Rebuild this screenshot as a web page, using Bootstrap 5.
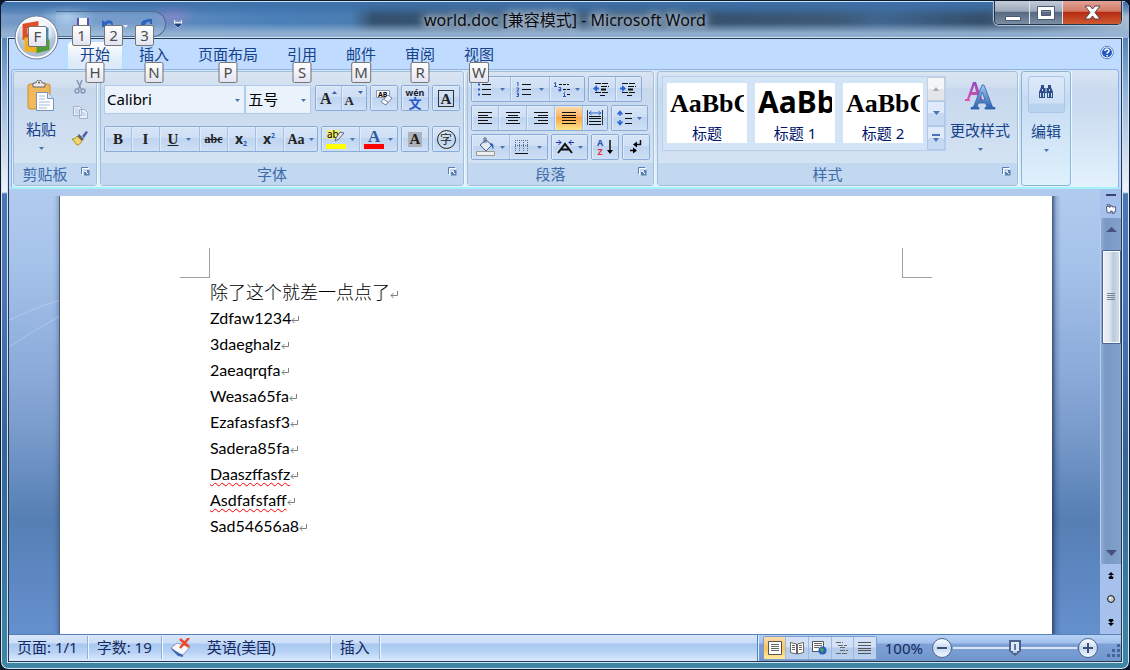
<!DOCTYPE html>
<html lang="zh-CN">
<head>
<meta charset="utf-8">
<meta name="viewport" content="width=device-width, initial-scale=1">
<title>world.doc [兼容模式] - Microsoft Word</title>
<link href="https://cdn.jsdelivr.net/npm/bootstrap@5.3.0/dist/css/bootstrap.min.css" rel="stylesheet">
<style>
  body { font: 15px/20px "Noto Sans", "Noto Sans CJK SC", sans-serif; color: #15428b; background: #0b1626; overflow: hidden; }
  .win { height: 100vh; border: 1px solid #0d1a2c; border-radius: 8px; position: relative; overflow: hidden;
    background: linear-gradient(180deg, #3a6da6 0, #4d7fb5 30px, #93b4da 90px, #dfe6f2 170px, #eef2fa 191px, #4a76b6 193px, #4a74b4 300px, #35649a 450px, #3f86a4 100%);
    box-shadow: inset 0 0 0 1px #d5e6f5; }
  .titlebar { height: 37px; position: relative; color: #000;
    background: linear-gradient(180deg, rgba(62,112,170,.95) 3px, rgba(62,112,170,.5) 10px, rgba(62,112,170,0) 15px, rgba(150,180,212,0) 22px, rgba(150,180,212,.9) 32px),
      radial-gradient(circle at 66px 14px, #a9cbe9 0, transparent 28px), radial-gradient(circle at 172px 8px, #8b88c8 0, transparent 24px),
      radial-gradient(ellipse at 195px 38px, #a9cfe4 0, transparent 38px),
      linear-gradient(90deg, #7499c6 0, #5d8abf 14%, #4a80b8 24%, #4a7db2 31%, #34526f 33%, #3a587a 45%, #34526f 62%, #3d5a78 74%, #40668f 78%, #34506c 87%, #4f6987 92%, #a9bdd2 100%);
    box-shadow: inset 0 1px 0 #cfe4f5; }
  .caption-text { font-size: 16px; color: #0c0c10; text-shadow: 0 0 6px #c3d3e4, 0 0 10px #c3d3e4, 0 0 12px #c3d3e4; }
  .qat { position: absolute; left: 55px; top: 10px; height: 26px; width: 110px; border: 1px solid #4d6c94; border-left: 0; border-radius: 0 13px 13px 0; background: rgba(190,215,240,.2); }
  .qat button, .qat-more { position: absolute; border: 0; background: none; padding: 0; line-height: 0; }
  .orb { position: absolute; z-index: 5; left: 13px; top: 14px; width: 45px; height: 45px; padding: 0; border: 0; background: none; line-height: 0; }
  .keytip { position: absolute; z-index: 6; height: 21px; min-width: 19px; padding: 0 2px; font-size: 15px; line-height: 19px; text-align: center; color: #4c4c4c;
    border: 1px solid #767676; border-radius: 2px; background: linear-gradient(#fff, #e3e4f0); }
  .winbtns { position: absolute; right: 7px; top: 0; height: 24px; border: 1px solid #24354b; border-top: 0; border-radius: 0 0 5px 5px; overflow: hidden; box-shadow: inset 0 0 0 1px #c7d4e2, 0 0 1px 1px #b8cbe0; }
  .winbtns button { border: 0; padding: 0; line-height: 0; border-right: 1px solid #dce4ee; background: linear-gradient(#c3ccd8 0, #9aa8b9 45%, #56687f 48%, #7c8ea4 100%); }
  .winbtns .w-min { width: 35px; } .winbtns .w-max { width: 33px; }
  .winbtns .w-close { width: 58px; border-right: 0; background: linear-gradient(#e2a395 0, #d27a66 45%, #b42a12 48%, #cf5a30 100%); }
  .client { margin: 0 7px 7px; border: 1px solid #28374f; min-height: 0; background: #bfdbff; box-shadow: 0 0 0 1px #cfe6f7; position: relative; z-index: 1; }
  .tabs { height: 30px; padding: 3px 7px 0 59px; gap: 5px; position: relative; z-index: 2; }
  .tabs .tab { position: relative; height: 27px; padding: 2px 12px 0; line-height: 20px; color: #15428b; text-decoration: none; }
  .tabs .tab.active { background: linear-gradient(#fff, #e3eefb 60%, #dbe8f8); border-radius: 4px 4px 0 0; box-shadow: -1px 0 0 #a8e4fa, 1px 0 0 #a8e4fa; }
  .tabs .keytip { top: 20px; left: 50%; transform: translateX(-50%); }
  .tabs .help { border: 0; background: none; padding: 0; line-height: 0; margin-top: 3px; }
  .ribbon { height: 120px; margin: 0 2px; padding: 1px; gap: 3px; border: 1px solid #8db2e3; border-bottom: 2px solid #a6f2fb; border-radius: 4px;
    background: linear-gradient(#dae5f2 0, #c9d9ee 22px, #cbdcf0 40px, #e3f2fd 100%); }
  .grp { border: 1px solid #9fc0dd; border-radius: 3px; flex: none; box-shadow: 1px 0 0 #eef7ff;
    background: linear-gradient(#dae5f2 0, #d0deef 15px, #c7d8ed 16px, #d8e6f4 100%); }
  .grp-label { height: 22px; background: #c1d8f0; color: #3e6aaa; position: relative; text-align: center; line-height: 23px; padding-right: 20px; }
  .grp-label button { position: absolute; right: 6px; top: 4px; border: 0; padding: 0; background: none; line-height: 0; }
  .g-clip { width: 84px; } .g-font { width: 364px; } .g-para { width: 187px; } .g-style { width: 361px; } .g-edit { width: 50px; border-color: #86b7d9; background: linear-gradient(#dce9f7 0, #cbdff5 22px, #c6dbf3 24px, #def1fc 100%); }
  .g-para .grp-body { padding: 4px 3px 0; } .g-font .grp-body { padding: 13px 3px 0; } .g-style .grp-body { padding: 4px 4px 0; }
  .row-gap { gap: 3px; }
  .bg-box { height: 26px; border: 1px solid #89abda; border-radius: 2px; overflow: hidden; display: flex; flex: none; }
  .rb { border: 0; border-radius: 0; padding: 0; display: flex; align-items: center; justify-content: center; gap: 4px; flex: 1 1 0; color: #222;
    background: linear-gradient(#d6e4f6 0, #cfdff4 45%, #bfd4f0 48%, #cfe0f6 100%); box-shadow: inset 1px 1px 0 #dfebf9; }
  .rb svg { overflow: visible; }
  .rb + .rb { border-left: 1px solid #a4c0e4; }
  .rb.on { background: linear-gradient(#fddcab 0, #fdbb6c 40%, #fba74a 50%, #fee58a 100%); }
  .w26{flex:0 0 26px}.w28{flex:0 0 28px}.w35{flex:0 0 35px}.w40{flex:0 0 40px}
  .b28{width:28px}.b37{width:37px}.b52{width:52px}.b77{width:77px}
  .serif { font: bold 15px/15px "Liberation Serif", serif; color: #222; }
  .boxed { border: 1px solid #333; width: 16px; height: 17px; line-height: 16px; }
  .shaded { background: #aeb2b8; width: 14px; }
  .ringed { border: 1px solid #222; border-radius: 50%; width: 19px; height: 19px; font: 12px/16px "Noto Sans CJK SC", sans-serif; }
  .py-top { font: bold 9px/9px "Noto Sans", sans-serif; color: #223; }
  .py-bot { font: bold 13px/12px "Noto Sans CJK SC", sans-serif; color: #2a56c8; }
  .az { font: bold 9px/9px "Noto Sans", sans-serif; color: #2a56b8; }
  .caret { flex: none; }
  .combo { height: 29px; border: 1px solid #b3cbea; background: #eaf2fb; position: relative; }
  .combo select { appearance: none; border: 0; background: none; width: 100%; height: 27px; padding: 0 2px 2px; color: #000; font-size: 15px; outline: 0; }
  .combo svg { position: absolute; right: 4px; top: 13px; pointer-events: none; }
  .c-face { width: 142px; } .c-size { width: 66px; }
  .big { border: 0; background: none; padding: 0; color: #15428b; display: flex; flex-direction: column; align-items: center; }
  .small-ic { border: 0; background: none; padding: 0; line-height: 0; }
  .gallery { height: 75px; width: 284px; border: 1px solid #b9d0ed; background: #d4e4f7; }
  .tiles { padding: 6px 0 0 4px; gap: 8px; }
  .tile { width: 80px; height: 60px; border: 0; padding: 0 3px; background: #fff; color: #00156e; overflow: hidden; display: block; line-height: 20px; }
  .tile .pv { display: block; width: 74px; height: 40px; overflow: hidden; text-align: left; color: #000; white-space: nowrap; font: bold 26px/42px "Liberation Serif", serif; }
  .tile .pv.h1s { font: bold 30px/37px "Noto Sans", sans-serif; }
  .gal-scroll { width: 18px; }
  .gal-scroll button { border: 1px solid #afc8ea; padding: 0; line-height: 0; flex: 1 1 0; background: linear-gradient(#dfebfb 48%, #c5d9f3 50%); }
  .gal-scroll button:first-child { background: linear-gradient(#f3f5f7 48%, #e2e5e9 50%); border-color: #c5cfdb; }
  .find-box { width: 37px; height: 37px; border: 1px solid #a9c6ea; border-radius: 3px; background: linear-gradient(#dce9f9 0, #cfe0f5 26px, #b9d2ee 27px); }
  .desk { min-height: 0; padding-top: 7px; position: relative; background: linear-gradient(#b1cbee 0, #a6c3ea 70px, #89a9d8 190px, #7a9ccc 240px, #567fb4 330px, #6490ce 100%); }
  .gut-l { width: 50px; flex: none; position: relative; overflow: hidden; box-shadow: inset -5px 0 5px -4px rgba(20,40,80,.35); }
  .gut-r { width: 48px; flex: none; background: linear-gradient(90deg, rgba(30,50,90,.75) 0, rgba(30,50,90,.2) 4px, transparent 9px); }
  .sheet { background: #fff; color: #000; border-left: 1px solid #4f5f78; overflow: hidden; }
  .corners { padding: 52px 120px 0; height: 82px; }
  .corner { width: 30px; height: 30px; border: 0 solid #a0a0a0; border-bottom-width: 1px; }
  .corner-l { border-right-width: 1px; } .corner-r { border-left-width: 1px; }
  .sheet p { margin: 0 150px; font: 16px/26px Lato, sans-serif; color: #000; }
  .sheet p.cn { font: 300 18px/27px "Noto Sans CJK SC", sans-serif; }
  .typo { text-decoration: underline wavy #f00 1px; text-underline-offset: 2px; text-decoration-skip-ink: none; }
  .vbar { width: 21px; flex: none; background: #a5c1ec; margin-top: -7px; }
  .vbar button { border: 0; background: none; padding: 0; line-height: 0; }
  .track { border-left: 1px solid #b4cff2; background: linear-gradient(90deg, #8fabd2, #7899c6 5px, #83a0c8); min-height: 0; }
  .thumb { height: 94px; width: 19px; margin-top: 11px; border: 1px solid #4e6398; border-radius: 1px; background: linear-gradient(90deg, #eef1f6 0, #dfe5ee 40%, #b9cadd 60%, #d5e0ec 100%); box-shadow: inset 0 0 0 1px #f7fafd; }
  .status { height: 27px; color: #15285f; border-top: 1px solid #5580b8; background: linear-gradient(#d9e7fb 0, #cbddf7 8px, #a9c8f0 9px, #b7d2f5 17px, #dcebff 100%); line-height: 25px; }
  .status .cell { border-right: 1px solid #8eb0dd; box-shadow: 1px 0 0 #eef6ff; margin: 1px 1px 2px 0; line-height: 23px; padding: 0 9px 0 8px; white-space: nowrap; }
  .status .lang { min-width: 168px; }
  .st-right { border-left: 1px solid #4f7ec2; box-shadow: inset 1px 0 0 #e5f0ff; padding: 0 0 0 5px; background: linear-gradient(#b7d2f7 0, #a3c1ec 8px, #7ea2d8 9px, #7196cb 100%); }
  .views { height: 24px; width: 114px; border: 1px solid #7c9ccb; border-radius: 2px; overflow: hidden; }
  .views button { flex: 1 1 0; border: 0; border-right: 1px solid #9db9e0; padding: 0; line-height: 0; background: linear-gradient(#d2e1f5 45%, #b4cbec 50%, #bdd2f0); }
  .views button.on { background: linear-gradient(#f9ddb0, #f9c45e 50%, #fdeaa0); }
  .views button:last-child { border-right: 0; }
  .zoomer { appearance: none; width: 124px; height: 20px; background: linear-gradient(#dce6f3, #dce6f3) center / 100% 2px no-repeat; margin: 0; }
  .zoomer::-webkit-slider-thumb { appearance: none; width: 12px; height: 16px; border: 0;
    background: linear-gradient(#5a78a8, #5a78a8) center 4px / 2px 6px no-repeat, linear-gradient(#dce8f7, #dce8f7) center 2px / 8px 9px no-repeat, linear-gradient(#b6c8e2, #b6c8e2) center 10px / 4px 3px no-repeat, #4a638c; clip-path: polygon(0 0, 100% 0, 100% 68%, 50% 100%, 0 68%); }
  .round { border: 0; background: none; padding: 0; line-height: 0; }
</style>
<script src="https://cdn.jsdelivr.net/npm/bootstrap@5.3.0/dist/js/bootstrap.bundle.min.js"></script>
</head>
<body>
<svg width="0" height="0" class="position-absolute" aria-hidden="true">
  <defs>
    <symbol id="dn" viewBox="0 0 5 3"><path d="M0 0h5L2.500 3z" fill="#4a74b4"/></symbol>
    <symbol id="launch" viewBox="0 0 9 9"><path d="M.5 7V.5H7" fill="none" stroke="#5b7fae"/><path d="M1.500 8V1.500H8" fill="none" stroke="#fff"/><path d="M8.500 3v5.500H3V5h3V3z" fill="#5b7fae"/><path d="M4 4l3 3" stroke="#fff"/></symbol>
    <symbol id="ret" viewBox="0 0 8 9"><path d="M7.500 1v4.500H1M3.500 3L1 5.500 3.500 8" fill="none" stroke="#808080"/></symbol>
    <linearGradient id="ba" x2="0" y2="1"><stop stop-color="#9cc8f2"/><stop offset="1" stop-color="#2c60ac"/></linearGradient>
    <linearGradient id="pa" x2="0" y2="1"><stop stop-color="#8f4bc0"/><stop offset="1" stop-color="#e04fb0"/></linearGradient>
    <radialGradient id="orbg" cy=".3"><stop stop-color="#fff"/><stop offset=".6" stop-color="#eef2f8"/><stop offset="1" stop-color="#a9b9d0"/></radialGradient>
    <linearGradient id="cg" x2="0" y2="1"><stop stop-color="#fff"/><stop offset=".5" stop-color="#c5d9f3"/><stop offset="1" stop-color="#f2f8ff"/></linearGradient>
  </defs>
</svg>

<div class="win d-flex flex-column">
  <header class="titlebar flex-shrink-0 d-flex justify-content-center align-items-center">
    <div class="caption-text">world.doc [兼容模式] - Microsoft Word</div>
    <div class="qat">
      <button aria-label="保存" style="left:20px;top:6px"><svg width="14" height="14" viewBox="0 0 14 14"><path d="M1 0h12v14H1z" fill="#5a53b5"/><path d="M3 0h8v7H3z" fill="#fff"/><path d="M4 9h6v5H4z" fill="#c9d0ea"/></svg></button>
      <button aria-label="撤消" style="left:45px;top:6px"><svg width="15" height="14" viewBox="0 0 15 14"><path d="M1 2v7h7L5.500 6.500C8 4 11 5 11 9c3-5-2-9-7.500-5z" fill="#2c62c0"/></svg></button>
      <button aria-label="撤消列表" style="left:67px;top:13px"><svg width="5" height="3"><path d="M0 0h5L2.500 3z" fill="#e4effa"/></svg></button>
      <button aria-label="重复" style="left:83px;top:6px"><svg width="15" height="14" viewBox="0 0 15 14"><path d="M8 1h5v5h-2V4c-3-1-6 2-5 6l-3 1C0 5 4 1 8 2z" fill="#2c62c0"/></svg></button>
      <span class="keytip" style="left:16px;top:13px">1</span><span class="keytip" style="left:48px;top:13px">2</span><span class="keytip" style="left:79px;top:13px">3</span>
    </div>
    <button class="qat-more" aria-label="自定义快速访问工具栏" style="left:173px;top:19px"><svg width="8" height="9" viewBox="0 0 8 9"><path d="M0 0h8v3l-4 5-4-5z" fill="#e8f1fb"/><path d="M1 1h6M1 4h6L4 7z" stroke="#1d3f7c" fill="#1d3f7c"/></svg></button>
    <div class="winbtns d-flex">
      <button class="w-min" aria-label="最小化"><svg width="17" height="16"><path d="M1.500 11.500h15v4h-15z" fill="#fff" stroke="#4a5a70"/></svg></button>
      <button class="w-max" aria-label="最大化"><svg width="18" height="14"><path d="M.5.5h17v13H.5zM4.500 4.500h9v5h-9z" fill="#fff" stroke="#4a5a70" fill-rule="evenodd"/></svg></button>
      <button class="w-close" aria-label="关闭"><svg width="17" height="15" viewBox="0 0 17 15"><path d="M1 1h5l2.500 3L11 1h5l-5 6.500 5 6.500h-5l-2.500-3L6 14H1l5-6.500z" fill="#fff" stroke="#5a4048"/></svg></button>
    </div>
  </header>
  <button class="orb" aria-label="Office 按钮">
    <svg width="45" height="45" viewBox="0 0 45 45"><circle cx="22.500" cy="22.500" r="21.500" fill="url(#orbg)" stroke="#6c7f9c"/><circle cx="22.500" cy="22.500" r="20" fill="none" stroke="#fff" stroke-width="1.500"/><path d="M4 22a18.500 18.500 0 0 0 37 0q-18 5-37 0" fill="#b4c4da" opacity=".5"/>
      <g fill="none" stroke-width="5"><path d="M11 11l11-2v12l-11 1z" stroke="#dd4f25"/><path d="M24 14l8 1v8h-8z" stroke="#2f8cd4"/><path d="M13 25v9l10 1V25z" stroke="#f2b021"/><path d="M25 26l8 1v6l-8 2z" stroke="#4f9c38"/></g></svg>
    <span class="keytip" style="left:14px;top:11px">F</span>
  </button>

  <main class="client flex-fill d-flex flex-column">
    <nav class="tabs d-flex flex-shrink-0" aria-label="功能区">
      <a class="tab active" href="#">开始<span class="keytip">H</span></a>
      <a class="tab" href="#">插入<span class="keytip">N</span></a>
      <a class="tab" href="#">页面布局<span class="keytip">P</span></a>
      <a class="tab" href="#">引用<span class="keytip">S</span></a>
      <a class="tab" href="#">邮件<span class="keytip">M</span></a>
      <a class="tab" href="#">审阅<span class="keytip">R</span></a>
      <a class="tab" href="#">视图<span class="keytip">W</span></a>
      <button class="help ms-auto align-self-start" aria-label="帮助"><svg width="14" height="15" viewBox="0 0 14 14"><circle cx="7" cy="7" r="6.300" fill="#fff" stroke="#5c86c4"/><circle cx="7" cy="7" r="5" fill="#2459c8"/><path d="M5 5.500C5 3 9.200 3 9 5.400 8.800 6.800 7 6.500 7 8.300M7 9.500V11" stroke="#fff" stroke-width="1.500" fill="none"/></svg></button>
    </nav>

    <section class="ribbon d-flex flex-shrink-0">
      <div class="grp g-clip d-flex flex-column">
        <div class="grp-body flex-fill d-flex">
          <button class="big ms-2 ps-1 pt-2">
            <svg width="28" height="31" viewBox="0 0 28 31"><rect x="1" y="4" width="22" height="25" rx="2" fill="#f0b95c" stroke="#c98f35"/><path d="M6 7V3h3c0-4 6-4 6 0h3v4z" fill="#e8e8e8" stroke="#666"/><circle cx="12" cy="2.500" r="1" fill="#555"/><path d="M9.500 12.500h11l6 6v12h-17z" fill="#fff" stroke="#7a93b8"/><path d="M20.500 12.500v6h6" fill="#dbe6f5" stroke="#7a93b8"/><path d="M12 16h6M12 19h6M12 22h11M12 25h11M12 28h8" stroke="#a3b9d9"/></svg>
            <span class="mt-2">粘贴</span><svg class="mt-2" width="5" height="3"><use href="#dn"/></svg>
          </button>
          <div class="d-flex flex-column align-items-center ms-3 pt-2 gap-2">
            <button class="small-ic" aria-label="剪切"><svg width="12" height="14" viewBox="0 0 12 14"><path d="M3 0l4 9M8 0L4.500 9" stroke="#8795b5" stroke-width="1.500"/><circle cx="3" cy="11" r="2" fill="none" stroke="#8795b5" stroke-width="1.400"/><circle cx="9" cy="11" r="2" fill="none" stroke="#8795b5" stroke-width="1.400"/></svg></button>
            <button class="small-ic mt-1" aria-label="复制"><svg width="15" height="13" viewBox="0 0 15 13"><path d="M.5.5h6l2 2v7h-8zM6.500 3.500h5l3 3v6h-8z" fill="#e8eefa" stroke="#a0b0ce"/><path d="M2 3h3M2 5h4M2 7h4M8 7h4M8 9h5" stroke="#b6c2dc"/></svg></button>
            <button class="small-ic mt-1" aria-label="格式刷"><svg width="16" height="15" viewBox="0 0 16 15"><path d="M10 5l4-5 2 1-4 6z" fill="#4f5fae"/><path d="M7 3l5 5-2 2-5-4z" fill="#5d6470"/><path d="M5 5l5 5c-2 3-3 4-5 4L0 8c3 0 4-1 5-3z" fill="#f0d56c" stroke="#a98a30"/></svg></button>
          </div>
        </div>
        <div class="grp-label">剪贴板<button aria-label="剪贴板选项"><svg width="9" height="9"><use href="#launch"/></svg></button></div>
      </div>

      <div class="grp g-font d-flex flex-column">
        <div class="grp-body flex-fill">
          <div class="d-flex">
            <div class="combo c-face"><select aria-label="字体"><option>Calibri</option></select><svg width="5" height="3"><use href="#dn"/></svg></div>
            <div class="combo c-size"><select aria-label="字号"><option>五号</option></select><svg width="5" height="3"><use href="#dn"/></svg></div>
            <div class="d-flex row-gap ps-1">
              <div class="bg-box b52">
                <button class="rb gap-0" aria-label="增大字体"><span class="serif fs-6">A</span><svg width="5" height="14"><path d="M0 3h5L2.500 0z" fill="#3a62ac"/></svg></button>
                <button class="rb gap-1" aria-label="缩小字体"><span class="serif pt-1" style="font-size:13px">A</span><svg width="5" height="14"><path d="M0 0h5L2.500 3z" fill="#3a62ac"/></svg></button></div>
              <div class="bg-box b28"><button class="rb" aria-label="清除格式"><svg width="17" height="18" viewBox="0 0 17 18"><path d="M.5 1.500h13v7H.5z" fill="#fff" stroke="#8b98ae"/><text x="2" y="8" font-size="7" font-weight="bold">AB</text><path d="M12 6l4 3-6 7-5-3z" fill="#eef0fa" stroke="#8088a8"/><path d="M5 13l2-3 5 3-2 3z" fill="#fff" stroke="#8088a8"/></svg></button></div>
              <div class="bg-box b28"><button class="rb flex-column gap-0" aria-label="拼音指南"><span class="py-top">wén</span><span class="py-bot">文</span></button></div>
              <div class="bg-box b28"><button class="rb" aria-label="字符边框"><span class="serif boxed">A</span></button></div>
            </div>
          </div>
          <div class="d-flex row-gap pt-2 mt-1">
            <div class="bg-box" style="width:214px">
              <button class="rb w26" aria-label="加粗"><span class="serif">B</span></button>
              <button class="rb w28" aria-label="倾斜"><i class="serif">I</i></button>
              <button class="rb w40" aria-label="下划线"><u class="serif">U</u><svg class="caret ms-1" width="5" height="3"><use href="#dn"/></svg></button>
              <button class="rb w28" aria-label="删除线"><s class="serif" style="font-size:12px">abc</s></button>
              <button class="rb w28 gap-0" aria-label="下标"><b class="text-dark" style="font-size:14px">x</b><svg width="5" height="14" viewBox="0 0 5 14"><text y="14" font-size="7" font-weight="bold" fill="#2a56b8">2</text></svg></button>
              <button class="rb w28 gap-0" aria-label="上标"><b class="text-dark" style="font-size:14px">x</b><svg width="5" height="14" viewBox="0 0 5 14"><text y="6" font-size="7" font-weight="bold" fill="#2a56b8">2</text></svg></button>
              <button class="rb" aria-label="更改大小写"><span class="serif" style="font-size:14px">Aa</span><svg class="caret" width="5" height="3"><use href="#dn"/></svg></button>
            </div>
            <div class="bg-box b77">
              <button class="rb" aria-label="突出显示"><svg width="20" height="20" viewBox="0 0 20 20"><path d="M1 1h12v9H1z" fill="#f4ee62"/><text x="1" y="9" font-size="10">ab</text><path d="M10 9l4-6 4 1-5 6-4 2z" fill="#dce4f2" stroke="#5c6a86"/><path d="M0 15h20v5H0z" fill="#ff0"/></svg><svg class="caret" width="5" height="3"><use href="#dn"/></svg></button>
              <button class="rb" aria-label="字体颜色"><svg width="20" height="20" viewBox="0 0 20 20"><text x="4" y="13" font-size="17" font-weight="bold" font-family="Liberation Serif" fill="#2f5aa2">A</text><path d="M0 15h20v5H0z" fill="#f00"/></svg><svg class="caret" width="5" height="3"><use href="#dn"/></svg></button>
            </div>
            <div class="bg-box b28"><button class="rb" aria-label="字符底纹"><span class="serif shaded">A</span></button></div>
            <div class="bg-box b28"><button class="rb" aria-label="带圈字符"><span class="ringed">字</span></button></div>
          </div>
        </div>
        <div class="grp-label">字体<button aria-label="字体选项"><svg width="9" height="9"><use href="#launch"/></svg></button></div>
      </div>

      <div class="grp g-para d-flex flex-column">
        <div class="grp-body flex-fill d-flex flex-column row-gap">
          <div class="d-flex row-gap">
            <div class="bg-box" style="width:114px">
              <button class="rb" aria-label="项目符号"><svg width="15" height="14"><path d="M5 2.500h9M5 7.500h9M5 12.500h9" stroke="#111"/><path d="M1 2.500h2M1 7.500h2M1 12.500h2" stroke="#2a56b8" stroke-width="2"/></svg><svg class="caret ms-1" width="5" height="3"><use href="#dn"/></svg></button>
              <button class="rb" aria-label="编号"><svg width="15" height="15"><path d="M6 2.500h9M6 7.500h9M6 12.500h9" stroke="#111"/><path d="M1 1l1-.5V4M.5 6h2.200v1L.8 9H3M.5 11h2v1.500H1 2.500V14.500h-2" stroke="#2a56b8" fill="none"/></svg><svg class="caret ms-1" width="5" height="3"><use href="#dn"/></svg></button>
              <button class="rb w35 gap-1" aria-label="多级列表"><svg width="17" height="15"><path d="M5 2.500h10M9 7.500h7M13 12.500h4" stroke="#111" stroke-dasharray="3 1"/><path d="M0 1.500l1.500-1V4M0 4.500h3M4.500 5.500h2.200V9H5V7.500h2M10.500 9.500v1M9.500 11.500h1V15M9 14.500h3" stroke="#2a56b8" fill="none"/></svg><svg class="caret" width="5" height="3"><use href="#dn"/></svg></button>
            </div>
            <div class="bg-box" style="width:54px">
              <button class="rb" aria-label="减少缩进"><svg width="17" height="14"><path d="M2 1.500h14M8 4.500h8M2 10.500h14M7 13.500h5" stroke="#111" stroke-dasharray="6 1"/><path d="M8 7.500h5" stroke="#111" stroke-width="2"/><path d="M0 6.500L4 3v2.500h2v2H4V10z" fill="#2a62d0"/></svg></button>
              <button class="rb" aria-label="增加缩进"><svg width="17" height="14"><path d="M2 1.500h14M8 4.500h8M2 10.500h14M7 13.500h5" stroke="#111" stroke-dasharray="6 1"/><path d="M8 7.500h5" stroke="#111" stroke-width="2"/><path d="M6 6.500L2 3v2.500H0v2h2V10z" fill="#2a62d0"/></svg></button>
            </div>
          </div>
          <div class="d-flex row-gap">
            <div class="bg-box" style="width:137px">
              <button class="rb w26" aria-label="左对齐"><svg width="14" height="12"><path d="M0 .5h14M0 3.500h10M0 5.500h14M0 8.500h10M0 11.500h14" stroke="#111"/></svg></button>
              <button class="rb w28" aria-label="居中"><svg width="14" height="12"><path d="M0 .5h14M2 3.500h10M0 5.500h14M2 8.500h10M0 11.500h14" stroke="#111"/></svg></button>
              <button class="rb w28" aria-label="右对齐"><svg width="14" height="12"><path d="M0 .5h14M4 3.500h10M0 5.500h14M4 8.500h10M0 11.500h14" stroke="#111"/></svg></button>
              <button class="rb w28 on" aria-label="两端对齐"><svg width="14" height="12"><path d="M0 .5h14M0 3.500h14M0 5.500h14M0 8.500h14M0 11.500h14" stroke="#111"/></svg></button>
              <button class="rb" aria-label="分散对齐"><svg width="16" height="16"><path d="M.5 0v15M15.500 0v15" stroke="#333"/><path d="M2 3h12M4.500 1L2 3l2.500 2M11.500 1L14 3l-2.500 2" stroke="#2a62d0" fill="none"/><path d="M2 6.500h12M2 8.500h12M2 11.500h12M2 14.500h12" stroke="#111"/></svg></button>
            </div>
            <div class="bg-box b37"><button class="rb" aria-label="行距"><svg width="16" height="16"><path d="M3 2v4M3 10v4M.5 4.500L3 1.500l2.500 3M.5 11.500l2.500 3 2.500-3" stroke="#2a62d0" stroke-width="1.500" fill="none"/><path d="M8 3.500h7M8 8.500h7M8 13.500h7" stroke="#111"/></svg><svg class="caret" width="5" height="3"><use href="#dn"/></svg></button></div>
          </div>
          <div class="d-flex row-gap">
            <div class="bg-box b77">
              <button class="rb" aria-label="底纹"><svg width="20" height="18"><path d="M4 7l6-5 6 5-6 6z" fill="#e6ecf7" stroke="#4a5c80"/><path d="M8 5V0h2v5" fill="none" stroke="#4a5c80"/><path d="M14 5c4 0 4 3 3 7-1-3-1-4-3-5z" fill="#2a62c0"/><path d="M.5 13.500h18v4H.5z" fill="#eee" stroke="#999"/></svg><svg class="caret" width="5" height="3"><use href="#dn"/></svg></button>
              <button class="rb" aria-label="边框"><svg width="14" height="14"><path d="M.5 0v11M4.500 0v11M8.500 0v11M12.500 0v11M0 .5h13M0 5.500h13" stroke="#5a6a88" stroke-dasharray="1 1"/><path d="M0 13.500h13" stroke="#111"/></svg><svg class="caret ms-1" width="5" height="3"><use href="#dn"/></svg></button>
            </div>
            <div class="bg-box b37"><button class="rb" aria-label="中文版式"><svg width="18" height="14"><path d="M2 13l7-9 7 9M5 9.500h8" stroke="#111" stroke-width="2" fill="none"/><path d="M0 2.500h5M2.500 0L5 2.500 2.500 5M18 2.500h-5M15.500 0L13 2.500 15.500 5" stroke="#1530a0" fill="none"/></svg><svg class="caret" width="5" height="3"><use href="#dn"/></svg></button></div>
            <div class="bg-box b28"><button class="rb gap-1" aria-label="排序"><span class="az">A<br><span class="text-danger">Z</span></span><svg width="6" height="15"><path d="M3 0v11" stroke="#111" stroke-width="1.500"/><path d="M0 10h6l-3 4z"/></svg></button></div>
            <div class="bg-box b28"><button class="rb" aria-label="显示编辑标记"><svg width="12" height="14"><path d="M10.500 0v4.500H5M0 10.500h6" stroke="#111" stroke-width="1.500" fill="none"/><path d="M3 4.500l4-3v6zM7 10.500l-4-3v6z"/></svg></button></div>
          </div>
        </div>
        <div class="grp-label">段落<button aria-label="段落选项"><svg width="9" height="9"><use href="#launch"/></svg></button></div>
      </div>

      <div class="grp g-style d-flex flex-column">
        <div class="grp-body flex-fill d-flex">
          <div class="gallery d-flex">
            <div class="tiles d-flex flex-fill">
              <button class="tile"><span class="pv">AaBbC</span>标题</button>
              <button class="tile"><span class="pv h1s">AaBbC</span>标题 1</button>
              <button class="tile"><span class="pv">AaBbC</span>标题 2</button>
            </div>
            <div class="gal-scroll d-flex flex-column">
              <button aria-label="上一行"><svg width="6" height="4"><path d="M0 4h6L3 0z" fill="#a9a9a9"/></svg></button>
              <button aria-label="下一行"><svg width="7" height="4"><path d="M0 0h7L3.500 4z" fill="#4a74b4"/></svg></button>
              <button aria-label="其他"><svg width="8" height="8"><path d="M0 0h8v2H0zM1 4h6L4 8z" fill="#4a74b4"/></svg></button>
            </div>
          </div>
          <button class="big ms-1 pt-1">
            <svg width="32" height="32" viewBox="0 0 32 32"><path d="M1 21h5v-1.500H5L7 15h6l1 4.500V21h5L12 2H9L3 19H1zM8 12l2.500-7L12 12z" fill="url(#pa)" fill-rule="evenodd"/><path d="M7 29h8v-1.500l-2-.5 1.500-4h7l1.500 4-2 .5V29h10v-1.500L28.500 27 20 5h-2L9.500 27 7 27.500zM15.500 20l2.800-8 2.700 8z" fill="url(#ba)" stroke="#2f62ad" stroke-width=".8" fill-rule="evenodd"/></svg>
            <span class="mt-2">更改样式</span><svg class="mt-2" width="5" height="3"><use href="#dn"/></svg>
          </button>
        </div>
        <div class="grp-label">样式<button aria-label="样式选项"><svg width="9" height="9"><use href="#launch"/></svg></button></div>
      </div>

      <div class="grp g-edit d-flex flex-column align-items-center">
        <button class="big pt-1">
          <span class="find-box d-flex justify-content-center pt-2"><svg width="16" height="14" viewBox="0 0 16 14"><path d="M1 7l2-5V0h3v3h4V0h3v2l2 5v6H9V8H7v5H1z" fill="#2c4f8a"/><path d="M2.500 8v4M4.500 4v2M11.500 4v2M10.500 8v4M13.500 8v4M5.500 8v4M8 3v4" stroke="#cfe0f5"/></svg></span>
          <span class="mt-1 pt-1">编辑</span><svg class="mt-2" width="5" height="3"><use href="#dn"/></svg>
        </button>
      </div>
    </section>

    <section class="desk flex-fill d-flex">
      <div class="gut-l"><svg width="51" height="200" viewBox="0 0 51 200"><path d="M0 124Q25 112 51 104M0 151Q25 134 51 120" stroke="#c5dbf5" stroke-opacity=".5" fill="none"/></svg></div>
      <article class="sheet flex-fill">
        <div class="corners d-flex justify-content-between"><div class="corner corner-l"></div><div class="corner corner-r"></div></div>
        <p class="cn">除了这个就差一点点了<svg width="8" height="9"><use href="#ret"/></svg></p>
        <p>Zdfaw1234<svg width="8" height="9"><use href="#ret"/></svg></p>
        <p>3daeghalz<svg width="8" height="9"><use href="#ret"/></svg></p>
        <p>2aeaqrqfa<svg width="8" height="9"><use href="#ret"/></svg></p>
        <p>Weasa65fa<svg width="8" height="9"><use href="#ret"/></svg></p>
        <p>Ezafasfasf3<svg width="8" height="9"><use href="#ret"/></svg></p>
        <p>Sadera85fa<svg width="8" height="9"><use href="#ret"/></svg></p>
        <p><span class="typo">Daaszffasfz</span><svg width="8" height="9"><use href="#ret"/></svg></p>
        <p><span class="typo">Asdfafsfaff</span><svg width="8" height="9"><use href="#ret"/></svg></p>
        <p>Sad54656a8<svg width="8" height="9"><use href="#ret"/></svg></p>
      </article>
      <div class="gut-r"></div>
      <div class="vbar d-flex flex-column align-items-center">
        <button class="pt-1" aria-label="拆分"><svg width="10" height="3"><path d="M0 1h10v2H0z" fill="#3b4668"/></svg></button>
        <button class="pt-2 pb-1" aria-label="标尺"><svg width="12" height="10" viewBox="0 0 12 12"><path d="M1 1h4v3l-2-1zM.5 3.500l1 7h4v-2h2v3h2v-2h2v-6h-4v-1h-3z" fill="#fff" stroke="#3b4668"/></svg></button>
        <div class="track w-100 flex-fill d-flex flex-column align-items-center">
          <button class="pt-2" aria-label="向上滚动"><svg width="11" height="13"><path d="M0 6h11L5.500 1z" fill="#45527c"/></svg></button>
          <div class="thumb d-flex align-items-center justify-content-center"><svg width="8" height="8"><path d="M0 .5h8M0 2.500h8M0 4.500h8M0 6.500h8" stroke="#7b8390"/></svg></div>
          <button class="mt-auto pb-2" aria-label="向下滚动"><svg width="11" height="6"><path d="M0 0h11L5.500 6z" fill="#45527c"/></svg></button>
        </div>
        <div class="d-flex flex-column align-items-center pt-2 pb-2 gap-3">
          <button aria-label="上一页"><svg width="6" height="7"><path d="M0 3h6L3 0zM0 6h6L3 3zM1 6h4v1H1z"/></svg></button>
          <button aria-label="选择浏览对象"><svg width="8" height="8"><circle cx="4" cy="4" r="3.400" fill="#c9cdd2" stroke="#111"/><circle cx="3" cy="3" r="1" fill="#fff"/></svg></button>
          <button aria-label="下一页"><svg width="6" height="7"><path d="M1 0h4v1H1zM0 1h6L3 4zM0 4h6L3 7z"/></svg></button>
        </div>
      </div>
    </section>

    <footer class="status d-flex flex-shrink-0">
      <div class="cell">页面: 1/1</div>
      <div class="cell">字数: 19</div>
      <div class="cell lang d-flex align-items-center"><svg class="me-3" width="20" height="19" viewBox="0 0 20 19"><path d="M0 10l6-5 13 4-7 8-4-1z" fill="#f6f8fb" stroke="#8a96b8"/><path d="M0 10l8 5 4 2v2l-5-1-6-6z" fill="#4467b4"/><path d="M9 1l9 8M18 0L9 10" stroke="#f0472c" stroke-width="2.500"/></svg>英语(美国)</div>
      <div class="cell">插入</div>
      <div class="st-right ms-auto d-flex align-items-center">
        <div class="views d-flex">
          <button class="on" aria-label="页面视图"><svg width="14" height="14"><path d="M.5.5h13v13H.5z" fill="#fff" stroke="#555"/><path d="M3 3.500h8M3 5.500h8M3 7.500h8M3 9.500h8" stroke="#666"/></svg></button>
          <button aria-label="阅读版式"><svg width="14" height="14"><path d="M.5 1.500l6 1.500v10l-6-1.500zM13.500 1.500l-6 1.500v10l6-1.500z" fill="#fff" stroke="#666"/><path d="M2 4.500h3M2 6.500h3M2 8.500h3M9 4.500h3M9 6.500h3M9 8.500h3" stroke="#666"/></svg></button>
          <button aria-label="Web 版式"><svg width="15" height="14"><path d="M.5.500h11v10H.5z" fill="#fff" stroke="#555"/><path d="M2 2.500h8M2 4.500h8M2 6.500h5" stroke="#666"/><circle cx="10.500" cy="9.500" r="4" fill="#2a62b8"/><path d="M8 7l4 1-2 4z" fill="#4fae54"/></svg></button>
          <button aria-label="大纲视图"><svg width="12" height="12"><path d="M0 .5h7M2 3.500h9M4 5.500h6M4 8.500h8M0 11.500h12" stroke="#666" stroke-dasharray="5 1"/></svg></button>
          <button aria-label="普通视图"><svg width="13" height="12"><path d="M0 .5h13M0 3.500h13M0 6.500h13M0 8.500h13M0 11.500h13" stroke="#555"/></svg></button>
        </div>
        <span class="ps-2 pe-2">100%</span>
        <button class="round" aria-label="缩小"><svg width="22" height="22"><circle cx="11" cy="11" r="9.500" fill="url(#cg)" stroke="#4a638c"/><path d="M6 11h10" stroke="#3f5070" stroke-width="2"/></svg></button>
        <input class="zoomer" type="range" min="0" max="100" value="50" aria-label="显示比例">
        <button class="round me-1" aria-label="放大"><svg width="22" height="22"><circle cx="11" cy="11" r="9.500" fill="url(#cg)" stroke="#4a638c"/><path d="M6 11h10M11 6v10" stroke="#3f5070" stroke-width="2"/></svg></button>
        <svg class="ms-1 me-0 align-self-end mb-1" width="14" height="13"><path d="M0 10h3v3H0zM5 10h3v3H5zM10 10h3v3h-3zM5 5h3v3H5zM10 5h3v3h-3zM10 0h3v3h-3z" fill="#41659c"/></svg>
      </div>
    </footer>
  </main>
</div>
</body>
</html>
